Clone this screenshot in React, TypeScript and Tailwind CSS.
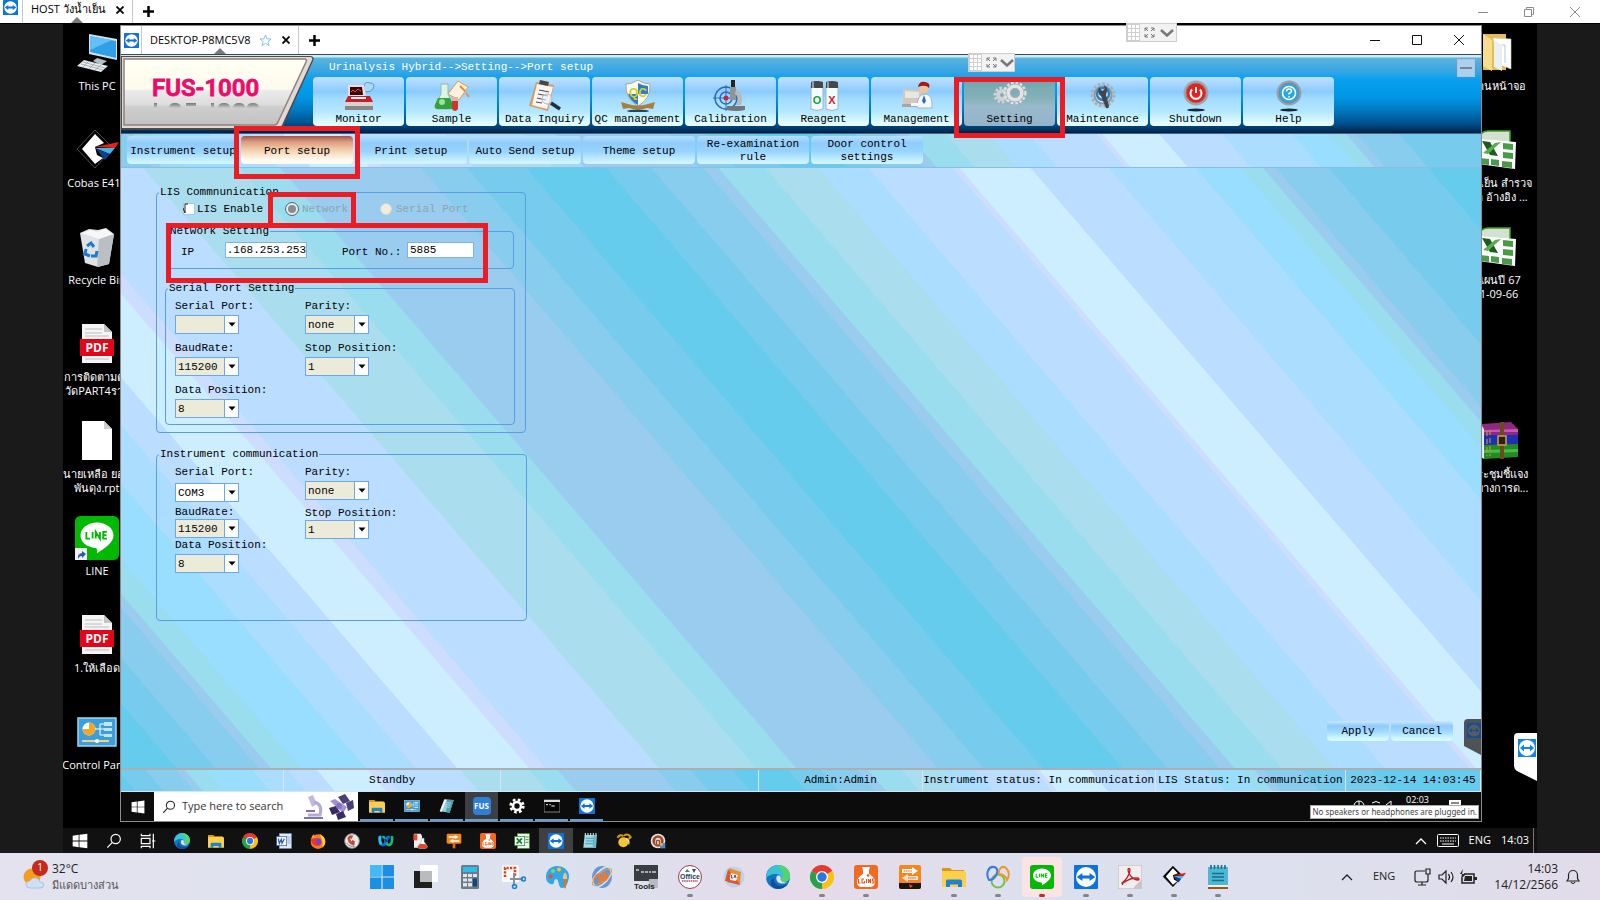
import type { ReactNode } from "react";

/* ---------- small drawings ---------- */

type IconProps = { className?: string };

const Svg = ({ className = "size-6", box = 24, children }: { className?: string; box?: number; children: ReactNode }) => (
  <svg viewBox={`0 0 ${box} ${box}`} className={`block shrink-0 ${className}`} aria-hidden="true">
    {children}
  </svg>
);

const TeamViewer = ({ className }: IconProps) => (
  <Svg className={className}>
    <rect width="24" height="24" rx="1" fill="#0b72e0" />
    <circle cx="12" cy="12" r="10" fill="#fff" />
    <path d="M2.8 12 8.4 8v2.5h7.2V8l5.6 4-5.6 4v-2.5H8.4V16z" fill="#0b72e0" />
  </Svg>
);
const Folder = ({ className }: IconProps) => (
  <Svg className={className}>
    <path d="M0 3h8l2 2h12v5H0z" fill="#d99a12" />
    <path d="M0 6h22q2 0 2 2v14H0z" fill="#fcd04f" />
    <path d="M4 22v-6q0-1.500 1.500-1.500h13q1.500 0 1.500 1.500v6h-4v-2.500H8V22z" fill="#1f82d0" />
  </Svg>
);
const Edge = ({ className }: IconProps) => (
  <Svg className={className}>
    <circle cx="12" cy="12" r="12" fill="#1474c4" />
    <path d="M0 12C1 4 7 0 12 0c8 0 12 6 12 11 0 4-3 6-7 6-3 0-3-2-2-3 1-2-1-5-5-5C5 9 1 11 0 14z" fill="#38c3d8" />
    <path d="M14 .2C20 1 24 6 24 11c0 4-3 6-7 6-3 0-3-2-2-3 4-3 3-9-3-12z" fill="#56d36b" />
    <path d="M8 13c-1 7 6 10 14 6-3 4-8 5-11 5C5 23 2 16 8 13z" fill="#0c4fa0" />
    <path d="M10.500 12c-1 5 3 7 8 6.500l3.500-1.500c-3 1-7 0-7.500-2.500.5-1 .5-2.500-.5-3.500-1-.7-3-.5-3.500 1z" fill="#dfe4f0" />
  </Svg>
);
const Chrome = ({ className }: IconProps) => (
  <Svg className={className}>
    <path d="M12 12 1.600 6A12 12 0 0 1 22.400 6z" fill="#e33b2e" />
    <path d="M12 12 22.400 6A12 12 0 0 1 12 24z" fill="#fbc116" />
    <path d="M12 12v12A12 12 0 0 1 1.600 6z" fill="#2aa148" />
    <circle cx="12" cy="12" r="6" fill="#fff" />
    <circle cx="12" cy="12" r="4.700" fill="#2b78e4" />
  </Svg>
);
const LineApp = ({ className }: IconProps) => (
  <Svg className={className}>
    <rect width="24" height="24" rx="3" fill="#00b900" />
    <path d="M12 3.500c5 0 9 3 9 7 0 4-4.500 7-9 9.800.4-1.800.2-2.600-1-2.900C6.500 17 3 14.400 3 10.500c0-4 4-7 9-7z" fill="#fff" />
    <path d="M6.200 8.700v3.600h2M9.600 8.700v3.600M11.300 12.300V8.700l2.300 3.600V8.700M17.400 8.700h-2v3.600h2M15.400 10.500h1.800" fill="none" stroke="#00b900" strokeWidth="1" />
  </Svg>
);
const Cobas = ({ className, light = false }: IconProps & { light?: boolean }) => (
  <Svg className={className} box={44}>
    <path d="M20 2 38 20 20 40 2 21z" fill="#000" stroke={light ? "#222" : "#4a4a4a"} strokeWidth="1" strokeLinejoin="round" />
    <path d="m20 6 9 9-9 4 2 8 6 3-8 6-6-7-7-8z" fill="#fff" />
    <path d="m20 19 24-5-4 6z" fill="#e8231c" />
    <path d="m20 20 20 0-5 6z" fill="#41b4e8" />
    <path d="m21 21 14 5-5 6z" fill="#123f8c" />
  </Svg>
);
const Excel = ({ className }: IconProps) => (
  <Svg className={className} box={40}>
    <path d="M1 5q3-4 8-4h22v20H1z" fill="#d4e0d2" stroke="#37a41b" strokeWidth="1.500" />
    <path d="m1 9 36 3-1 27L0 34z" fill="#fff" />
    <path d="m24 13 10 1v6l-10-1zM24 22l10 1v6l-10-1zM23 31l10 1v6l-10-1zM12 29l8 1v6l-8-1zM2 28l8 1v6l-8-1z" fill="#4a9b48" />
    <path d="m3 11 8 1 8 14-8-1z" fill="#1d5c1e" />
    <path d="m22 12-6 1L4 23l5 1z" fill="#58ae4e" />
  </Svg>
);
const Note = ({ className }: IconProps) => (
  <Svg className={className}>
    <path d="M2 2h20v18H2z" fill="#4bb9d6" />
    <path d="M2 20h20v2.500H2z" fill="#f0eee8" />
    <path d="M2 22h20v2H2z" fill="#a8510f" />
    <path d="M5 0v4M8.500 0v4M12 0v4M15.500 0v4M19 0v4" stroke="#176b85" strokeWidth="1.600" />
    <path d="M6 8.500h12M6 12h12M6 15.500h12" stroke="#15708c" strokeWidth="1.500" />
  </Svg>
);
const OldNote = ({ className }: IconProps) => (
  <Svg className={className}>
    <path d="m9 2 13 1-6 19-14-2z" fill="#8fd3de" />
    <path d="m12 3 10 0-6 19-5-1z" fill="#4d9fb4" />
    <path d="m8 2-7 18 3 1L11 3z" fill="#eef8fa" />
    <path d="m12 7 6 1M11 10l6 1M10 13l6 1" stroke="#d5f2f6" strokeWidth="1" />
  </Svg>
);
const PadNote = ({ className }: IconProps) => (
  <Svg className={className}>
    <path d="M4 3h18l-1 19H2z" fill="#9ed9e4" />
    <path d="M17 3h5l-1 19h-5z" fill="#6bb9ca" />
    <path d="M5 0v4M9 0v4M13 0v4M17 0v4M21 0v4" stroke="#dfe9ec" strokeWidth="1.600" />
    <path d="M6 8h12M6 12h12M5 16h12" stroke="#4d9fb4" strokeWidth="1.500" />
  </Svg>
);
const LoginsFlask = ({ className }: IconProps) => (
  <Svg className={className}>
    <rect width="24" height="24" rx="3" fill="#f26a21" />
    <path d="M8 2h8l-1 3v4c4 2 6 5 6 8 0 4-3 5-5 5H8c-3 0-5-2-5-5 0-3 2-6 6-8V5z" fill="#fff" />
    <path d="M4.500 14v4h2M10 14H8v4h2.500v-2M12.500 14v4M14.500 18v-4l2 4v-4M20 14h-1.500v2H20v2h-2" fill="none" stroke="#e2541b" strokeWidth="1.100" />
    <circle cx="14" cy="10.500" r="1.200" fill="#e2541b" />
  </Svg>
);
const OrangeArrows = ({ className }: IconProps) => (
  <Svg className={className}>
    <rect x="1" width="22" height="24" rx="2" fill="#f9861b" />
    <path d="M1 18h22v4q0 2-2 2H3q-2 0-2-2z" fill="#1d1512" />
    <path d="M4 4h10V2l6 4-6 4V8H4z" fill="#fff" />
    <path d="M20 11H10V9l-6 4 6 4v-2h10z" fill="#ffe2cf" />
    <path d="M6 6h8M10 13h8" stroke="#e2541b" strokeWidth="1.200" strokeDasharray="1.500 .6" />
    <path d="m11 19 4 2-3 2z" fill="#e2541b" />
  </Svg>
);
const OrangeSign = ({ className }: IconProps) => (
  <Svg className={className}>
    <rect x="1" y="1" width="22" height="15" rx="2" fill="#f9861b" />
    <path d="M10 16h4v7h-4z" fill="#e06a10" />
    <path d="M4 5h9V3l6 3-6 3V7H4zM20 11h-9V9l-6 3 6 3v-2h9z" fill="#fff" />
  </Svg>
);
const Start11 = ({ className }: IconProps) => (
  <Svg className={className}>
    <path d="M0 0h11.400v11.400H0zM12.600 0H24v11.400H12.600zM0 12.600h11.400V24H0zM12.600 12.600H24V24H12.600z" fill="#1a8fe3" />
    <path d="M0 0h11.400v11.400H0z" fill="#43b9f5" />
  </Svg>
);
const Start10 = ({ className }: IconProps) => (
  <Svg className={className}>
    <path d="m1 4 9-1.300v8.700H1zM11.200 2.500 23 1v10.400H11.200zM1 12.600h9v8.700L1 20zM11.200 12.600H23V23l-11.800-1.600z" fill="#fff" />
  </Svg>
);
const Search = ({ className, color = "#fff" }: IconProps & { color?: string }) => (
  <Svg className={className}>
    <circle cx="14.500" cy="9" r="7" fill="none" stroke={color} strokeWidth="1.800" />
    <path d="M9.500 14 2 22" stroke={color} strokeWidth="1.800" />
  </Svg>
);
const ControlPanel = ({ className }: IconProps) => (
  <Svg className={className} box={40}>
    <rect x="1" y="6" width="38" height="28" fill="#3c9fdc" stroke="#9dd8f6" strokeWidth="1.500" />
    <circle cx="12" cy="17" r="6.500" fill="#fff" />
    <path d="M12 17v-6.500A6.500 6.500 0 1 1 5.500 17z" fill="#f6a623" />
    <path d="M18 17h5v-5h4M23 17h4M23 17v6h4" stroke="#fff" fill="none" />
    <path d="M27 10h8v4h-8zM27 16h8v3h-8zM27 22h8v3h-8z" fill="#bfe5fa" />
    <path d="M5 29h27" stroke="#f5d08a" strokeWidth="2" />
    <circle cx="20" cy="29" r="2" fill="#fff" />
  </Svg>
);
const Firefox = ({ className }: IconProps) => (
  <Svg className={className}>
    <circle cx="12" cy="13" r="11" fill="#ff7a1a" />
    <path d="M14 1c6 3 9 7 9 12 0 3-2 7-5 9 2-5 1-13-4-21z" fill="#ffcf33" />
    <circle cx="11.500" cy="13.500" r="5.500" fill="#7a3fd0" />
    <path d="M1 8c4-2 9 0 10 2l-3 2c0 4 4 6 8 4-3 6-14 5-15-8z" fill="#e8382b" />
    <path d="M2 9q0-5 4-7 0 3 3 5z" fill="#ff9a2a" />
  </Svg>
);
const WordDoc = ({ className }: IconProps) => (
  <Svg className={className}>
    <rect x="5" y="1" width="18" height="22" fill="#dfe9f8" stroke="#7d9bd0" />
    <path d="M17 6h5M17 9h5M17 12h5M17 15h5" stroke="#7d9bd0" />
    <rect x="1" y="5" width="15" height="14" fill="#f4f8ff" stroke="#2b57a7" />
    <path d="m3.500 8.500 1.500 7 3-6 1 6 3.500-7" fill="none" stroke="#2b57a7" strokeWidth="1.800" />
  </Svg>
);
const ExcelDoc = ({ className }: IconProps) => (
  <Svg className={className}>
    <rect x="5" y="1" width="18" height="22" fill="#e7f4e6" stroke="#4a9b48" />
    <path d="M17 6h5M17 10h5M17 14h5" stroke="#4a9b48" strokeWidth="1.500" />
    <rect x="1" y="5" width="15" height="14" fill="#f4fff4" stroke="#1d7a31" />
    <path d="m4 8 8 8M12 8l-8 8" stroke="#1d7a31" strokeWidth="2.500" />
  </Svg>
);
const Seal = ({ className }: IconProps) => (
  <Svg className={className}>
    <circle cx="12" cy="12" r="11" fill="#e9e6e6" stroke="#8b8b8b" strokeWidth="1.500" />
    <path d="M5 7q4-5 9-3l-3 5 6 4-2 6q-6-1-8-5z" fill="#c4473b" />
    <path d="m9 8 4 2-2 3zM15 15l4-3v5z" fill="#fff" />
    <path d="M4 15q4 6 12 5" stroke="#8d8d8d" strokeWidth="1.500" fill="none" />
  </Svg>
);
const Profile = ({ className }: IconProps) => (
  <Svg className={className}>
    <circle cx="12" cy="12" r="11" fill="#e9e4e0" />
    <circle cx="12" cy="12" r="8.500" fill="#9b4a33" />
    <path d="M8 17v-6q0-4 4-4t4 4v6" fill="#f0d6c4" />
    <path d="M10 17v-6M14 17v-6M10 11h4" stroke="#7a3626" strokeWidth="1.500" />
    <path d="M15 15h8v8h-8z" fill="#4f86c6" />
    <path d="M15 15h4v4h-4z" fill="#e9b33d" />
  </Svg>
);
const Webex = ({ className }: IconProps) => (
  <Svg className={className}>
    <path d="M3 6c-1 6 1 12 5 12 5 0 4-12 8-12" stroke="#1266e2" strokeWidth="4.500" fill="none" strokeLinecap="round" />
    <path d="M8 6c4 0 3 12 8 12 4 0 6-6 5-12" stroke="#16b979" strokeWidth="4" fill="none" strokeLinecap="round" />
    <path d="M3 6c-1 5 0 8 1 10" stroke="#28c4e8" strokeWidth="4" fill="none" strokeLinecap="round" />
    <path d="M10 9q2 2 3 5" stroke="#0a3fa8" strokeWidth="3.500" fill="none" />
  </Svg>
);
const LabDoc = ({ className }: IconProps) => (
  <Svg className={className}>
    <path d="M3 1h10l2 3v18H3z" fill="#eee" />
    <path d="M2 2h6v9H2z" fill="#e24a32" />
    <path d="M14 8h4v5l5 7q0 3-3 3h-9q-3 0-2-3l5-7z" fill="#fff" stroke="#bbb" />
    <path d="m12 16 9 1 2 3q0 3-3 3h-9q-3 0-2-3z" fill="#e9432f" />
  </Svg>
);
const Paw = ({ className }: IconProps) => (
  <Svg className={className}>
    <circle cx="11" cy="14" r="7.500" fill="#f2c632" />
    <path d="M2 7q5-6 9-2M12 4q6-4 10 2l-3 3" stroke="#d99a12" strokeWidth="3" fill="none" />
    <path d="M15 8q6 2 4 9" stroke="#fff1a8" strokeWidth="1.800" fill="none" />
  </Svg>
);
const Globe = ({ className }: IconProps) => (
  <Svg className={className}>
    <ellipse cx="12" cy="12" rx="10" ry="11" fill="#6a96cf" />
    <ellipse cx="12" cy="12" rx="13" ry="6" transform="rotate(-48 12 12)" fill="none" stroke="#cfe0f5" strokeWidth="1.800" />
    <ellipse cx="12" cy="12" rx="12" ry="4" transform="rotate(-40 12 12)" fill="none" stroke="#e0a043" strokeWidth="1" />
    <path d="M4 15q4-9 6-3l-1 5q2 0 3-5t3-3l-1 6q2 1 5-6" stroke="#f2782a" strokeWidth="2" fill="none" />
  </Svg>
);
const Palette = ({ className }: IconProps) => (
  <Svg className={className}>
    <path d="M11 1C4 1 0 6 0 12c0 5 4 8 7 7 2-1 0-4 3-5s2 9 6 9c4 0 7-7 7-12C23 5 17 1 11 1z" fill="#34a5e5" />
    <circle cx="7" cy="6" r="2" fill="#7bd66a" />
    <circle cx="13" cy="4.500" r="2" fill="#f7c331" />
    <circle cx="4.500" cy="11.500" r="2" fill="#e84f3d" />
    <path d="M17 12h4l-1 10q-1 3-2 0z" fill="#c77e2e" />
    <path d="M17 11q2-7 4 0v3h-4z" fill="#e9c486" />
  </Svg>
);
const Snip = ({ className }: IconProps) => (
  <Svg className={className}>
    <rect width="17" height="17" rx="1.500" fill="#fafafa" />
    <path d="M3 12V3h10v9" fill="none" stroke="#d8401f" strokeWidth="2.500" strokeDasharray="2.200 1.300" />
    <path d="M12 8v13M8 14h13" stroke="#8a9097" strokeWidth="2" />
    <circle cx="12.500" cy="21.500" r="2" fill="none" stroke="#1583d8" strokeWidth="1.600" />
    <circle cx="21.500" cy="14" r="2" fill="none" stroke="#1583d8" strokeWidth="1.600" />
  </Svg>
);
const Calc = ({ className }: IconProps) => (
  <Svg className={className}>
    <rect x="3" y="0" width="18" height="24" rx="1.500" fill="#6c7b87" />
    <rect x="5" y="2" width="14" height="5" fill="#28c0ea" />
    <path d="M5 9h4v3H5zM10 9h4v3h-4zM15 9h4v3h-4zM5 13.500h4v3H5zM10 13.500h4v3h-4zM5 18h4v3.500H5zM10 18h4v3.500h-4z" fill="#dfe5ea" />
    <path d="M15 13.500h4v8h-4z" fill="#12447d" />
  </Svg>
);
const TaskView = ({ className }: IconProps) => (
  <Svg className={className}>
    <rect width="18" height="17" y="6" fill="#1f1f1f" />
    <rect x="6" y="0" width="18" height="17" fill="#fff" opacity=".95" />
    <path d="M6 6h12v11H6z" fill="#b9bbbf" />
  </Svg>
);
const Tools = ({ className }: IconProps) => (
  <Svg className={className}>
    <rect width="24" height="16" fill="#3a3d41" />
    <path d="M2 5h3M7 7h3M11 7h3M15 7h2M18 7h4" stroke="#cbd3d8" strokeWidth="1.500" />
    <path d="M15 14h9v9h-9z" fill="#b8bcc0" />
    <text x="0" y="23.500" fontSize="8" fontWeight="700" fontFamily="Liberation Sans, sans-serif" fill="#222">Tools</text>
  </Svg>
);
const Office = ({ className }: IconProps) => (
  <Svg className={className}>
    <circle cx="12" cy="12" r="11.500" fill="#fff" stroke="#9a3a44" strokeWidth="1" />
    <path d="m7 7 2-3 3 3z" fill="#3e8f4c" />
    <path d="M14 4h4l-2 4z" fill="#34495e" />
    <text x="12" y="13.500" textAnchor="middle" fontSize="7" fontWeight="700" fontFamily="Liberation Sans, sans-serif" fill="#1d3a5c">Office</text>
    <path d="M4 16h16" stroke="#b5434e" strokeWidth="1.500" strokeDasharray="1.500 .7" />
  </Svg>
);
const LabRing = ({ className }: IconProps) => (
  <Svg className={className}>
    <circle cx="12" cy="12" r="10.500" fill="#bcd4e8" />
    <path d="m7 3 12 4-3 4-9-3zM19 7l-1 13-4-3 1-9z" fill="#f08a32" />
    <path d="m18 20-13-3 2-4 8 2zM3 16l3-12 3 4-2 8z" fill="#e3542c" />
    <path d="m9 8 7 2-2 6-6-1z" fill="#f4f6f8" />
    <path d="M9.500 10v3h1.500M12 13l1-3 1 3" stroke="#333" strokeWidth=".8" fill="none" />
  </Svg>
);
const Rings = ({ className }: IconProps) => (
  <Svg className={className}>
    <circle cx="12" cy="16" r="6.500" fill="none" stroke="#76bf4a" strokeWidth="2" />
    <path d="M3 15C-1 8 3 1 8 2s4 8-1 12q-2 1-4 1z" fill="none" stroke="#3b78e0" strokeWidth="2" />
    <path d="M13 9c-1-5 3-9 7-6 4 4 3 9 1 12q-1-5-8-6z" fill="none" stroke="#ee9a2a" strokeWidth="2" />
  </Svg>
);
const Acrobat = ({ className }: IconProps) => (
  <Svg className={className}>
    <rect width="24" height="24" rx="1" fill="#f1eeee" stroke="#b5b0b0" />
    <path d="M16 22 24 14v10h-8z" fill="#c9c5c5" />
    <path d="M4 18c3-2 8-8 8-13 0-2-2-2-2 0 0 4 5 10 10 10 2 0 1-2-1-2-4 0-10 2-14 5-1 2 0 2-1 0z" fill="none" stroke="#bb1e26" strokeWidth="1.300" />
  </Svg>
);
const Pdf = () => (
  <Svg className="size-10" box={40}>
    <path d="M5 0h22l8 8v31H5z" fill="#f5f5f5" />
    <path d="M27 0v8h8z" fill="#c5c5c5" />
    <path d="M8 5h17M8 9h17M8 12h24M8 35h24" stroke="#bdbdbd" />
    <rect x="3" y="15" width="34" height="17" fill="#e2061b" />
    <text x="20" y="28" textAnchor="middle" fontSize="12" fontWeight="700" fontFamily="Open Sans, sans-serif" fill="#fff">PDF</text>
  </Svg>
);
const BlankDoc = () => (
  <Svg className="size-10" box={40}>
    <path d="M5 0h22l8 8v31H5z" fill="#fff" />
    <path d="M27 0v8h8z" fill="#cfcfcf" />
  </Svg>
);
const ThisPc = () => (
  <Svg className="size-11" box={44}>
    <path d="m14 3 28 5v21l-28-6z" fill="#d7e3ea" />
    <path d="m15 5 26 5v17l-26-6z" fill="#2fa0e8" />
    <path d="m15 5 22 4-22 10z" fill="#63c0f7" />
    <path d="m22 27 10 3-6 4-8-4z" fill="#b4bec4" />
    <path d="m9 29 24 6-7 6L2 35z" fill="#e8ebed" />
    <path d="m8 31 22 6M6 33l22 6M14 30l-6 6M20 32l-6 6M26 34l-6 5" stroke="#9aa3a8" strokeWidth=".8" />
  </Svg>
);
const RecycleBin = () => (
  <Svg className="size-10" box={40}>
    <path d="m3 6 9-4 9 1 8-2 8 6-5 30-11 3-13-4z" fill="#dfe3e5" />
    <path d="m37 7-15 5-2 28 12-3z" fill="#b9bfc2" />
    <path d="m4 6 10-3 6 2 8-3 8 5-14 5z" fill="#f6f7f7" />
    <path d="m10 19 4-3 3 4M9 22l-1 5 5 2M14 29l5 0 1-5" fill="none" stroke="#1d7ad0" strokeWidth="3" />
  </Svg>
);
const FolderDesk = () => (
  <Svg className="size-10" box={40}>
    <path d="M4 1h23v36H4z" fill="#e3bd58" />
    <path d="m14 5 18 1v30l-13-5z" fill="#fff" stroke="#ccc" strokeWidth=".6" />
    <path d="m4 1 9 6v31l-9-5z" fill="#f8dd8e" />
    <path d="m15 7 8 5v26l-8-4z" fill="#eceff1" />
    <path d="M23 12h3v18" stroke="#b8c7d6" fill="none" />
  </Svg>
);
const WinRar = () => (
  <Svg className="size-10" box={40}>
    <path d="m2 3 30-2 7 7v7H5z" fill="#8d2a7d" />
    <path d="m5 9 34-1v3H5z" fill="#c657b4" />
    <path d="m2 14 37 0v10H5z" fill="#1d2fb4" />
    <path d="m2 24 37-1v13l-34 2z" fill="#248a24" />
    <path d="m5 29 34-1v3l-34 1z" fill="#49b948" />
    <path d="M2 3v33l3 2V8z" fill="#e8e8e8" />
    <path d="M21 1h4v37h-4z" fill="#6d4a1c" />
    <path d="M19 15h8v9h-8z" fill="#2c2118" stroke="#c9a24a" strokeWidth="1.500" />
    <path d="M8 10v25M11 9v26" stroke="#b8953a" strokeWidth="1.200" strokeDasharray="5 3" />
  </Svg>
);
const LineDesk = () => (
  <span className="relative block">
    <LineApp className="size-11" />
    <Svg className="absolute bottom-0 left-0 size-3" box={12}>
      <path d="M0 0h12v12H0z" fill="#f2f2f2" />
      <path d="M3 11q-1-5 4-6V3l4 3-4 4V8Q4 8 3 11z" fill="#2659a8" />
    </Svg>
  </span>
);

/* ---------- application tool bar drawings ---------- */

const tool = "h-8 w-10";
const MonitorIcon = () => (
  <svg viewBox="0 0 40 32" className={tool} aria-hidden="true">
    <path d="M25 7q0-6 6-4 6 0 3 6-2 3-7 3" fill="#a9d8f5" stroke="#4f9bd0" />
    <path d="M9 5h16l2 12H9z" fill="#e9dede" />
    <path d="M11 7h12l1 8H11z" fill="#3b0508" />
    <path d="m12 12 2-2 2 2 3-3 3 2" stroke="#f04a4a" fill="none" />
    <path d="M9 16h22l3 6H6z" fill="#c91e28" />
    <path d="M6 22h28v7H6z" fill="#d8d3d2" />
    <path d="M6 26h28v4H6z" fill="#8b8786" />
    <path d="M12 18h15" stroke="#fff" strokeWidth="2" />
  </svg>
);
const SampleIcon = () => (
  <svg viewBox="0 0 40 32" className={tool} aria-hidden="true">
    <path d="m16 14 10-13 10 6-9 13z" fill="#fff2dc" stroke="#d9a05c" />
    <path d="m28 6 5 5M34 13l3 4" stroke="#f28b2d" strokeWidth="2" />
    <path d="M9 4h7v10l5 11q1 4-3 4H6q-4 0-3-4l6-11z" fill="#dff3e4" stroke="#9bb7a8" />
    <path d="M6 18h12l3 7q1 4-3 4H6q-4 0-3-4z" fill="#33a23d" />
    <circle cx="10" cy="22" r="3" fill="#9be39a" />
    <path d="M20 17h6v12q-3 4-6 0z" fill="#c9382b" />
    <path d="M20 17h6v4h-6z" fill="#e6b3a9" />
  </svg>
);
const InquiryIcon = () => (
  <svg viewBox="0 0 40 32" className={tool} aria-hidden="true">
    <path d="m11 2 18 3-6 26L4 26z" fill="#d29c6b" />
    <path d="m12 4 16 3-6 22-15-4z" fill="#fdf6ee" />
    <path d="m15 0 9 2-1 4-9-2z" fill="#4b4340" />
    <path d="m14 10 10 2M13 14l10 2M12 18l9 2M11 22l6 1" stroke="#4a4a6a" strokeWidth="1.200" />
    <circle cx="22" cy="19" r="5" fill="#e8f4ff" fillOpacity=".6" stroke="#b7b7b7" />
    <path d="m26 23 9 6" stroke="#222c3f" strokeWidth="3.500" />
  </svg>
);
const QcIcon = () => (
  <svg viewBox="0 0 40 32" className={tool} aria-hidden="true">
    <path d="M8 4q6 0 12-4 6 4 12 4 1 15-12 22Q7 19 8 4z" fill="#f7f9f4" stroke="#a5a8a0" />
    <path d="M20 3q5 3 10 3v8H20zM10 14h10v11q-8-4-10-11z" fill="#2f7fc4" />
    <path d="m3 22 7 2q10 3 20 0l7-2-2 7-6-1q-9 3-18 0l-6 1z" fill="#a9803a" />
    <text x="20" y="17" textAnchor="middle" fontSize="12" fontWeight="700" fontFamily="Liberation Sans, sans-serif" fill="#d8cf19">QC</text>
    <ellipse cx="20" cy="31" rx="11" ry="1.500" fill="#1f4a66" />
  </svg>
);
const CalibrationIcon = () => (
  <svg viewBox="0 0 40 32" className={tool} aria-hidden="true">
    <circle cx="15" cy="18" r="11" fill="none" stroke="#2a6db5" strokeWidth="1.500" />
    <circle cx="15" cy="18" r="6" fill="none" stroke="#2a6db5" strokeWidth="1.500" />
    <path d="M15 5v26M2 18h26" stroke="#2a6db5" />
    <circle cx="15" cy="18" r="2.500" fill="#c6243b" />
    <path d="M20 0h4v8h-4z" fill="#222" />
    <path d="M19 7h6v13h-6z" fill="#8d949a" />
    <path d="M25 9q9 4 5 16h-5q4-8-1-11z" fill="#b5babd" />
    <path d="M16 26h18v4q-9 2-18 0z" fill="#6f777c" />
  </svg>
);
const ReagentIcon = () => (
  <svg viewBox="0 0 40 32" className={tool} aria-hidden="true">
    <path d="M7 5h12v24q-6 3-12 0zM22 5h12v24q-6 3-12 0z" fill="#f2fbff" stroke="#9db5c2" />
    <path d="M7 2q6-2 12 0v6H7zM22 2q6-2 12 0v6H22z" fill="#44484b" />
    <path d="M9 2v6M24 2v6" stroke="#9a9fa2" strokeWidth="2" />
    <text x="13" y="24" textAnchor="middle" fontSize="11" fontWeight="700" fontFamily="Liberation Sans, sans-serif" fill="#15a03c">O</text>
    <text x="28" y="24" textAnchor="middle" fontSize="11" fontWeight="700" fontFamily="Liberation Sans, sans-serif" fill="#d32222">X</text>
  </svg>
);
const ManagementIcon = () => (
  <svg viewBox="0 0 40 32" className={tool} aria-hidden="true">
    <path d="m6 9 19 1v14H6z" fill="#cfc9c0" />
    <path d="m8 11 14 1v6H8z" fill="#e9e6df" />
    <path d="M5 24h22v3H5z" fill="#a9a49c" />
    <circle cx="27" cy="8" r="5" fill="#f1c39c" />
    <path d="M21 7q1-6 7-5 6 1 4 6-3-4-11-1z" fill="#9d1c1c" />
    <path d="M20 28q0-14 8-14t7 14z" fill="#f4f8fb" stroke="#9fb6c4" />
    <path d="m27 15 2 6-2 3-2-3z" fill="#2b6cc0" />
    <path d="M14 23h10v3H14z" fill="#f4f8fb" />
  </svg>
);
const Gear = ({ x, y, r, fill }: { x: number; y: number; r: number; fill: string }) => (
  <g>
    <circle cx={x} cy={y} r={r} fill="none" stroke={fill} strokeWidth="3" strokeDasharray="2.500 1.800" />
    <circle cx={x} cy={y} r={r - 3} fill="none" stroke={fill} strokeWidth="4" />
  </g>
);
const SettingIcon = () => (
  <svg viewBox="0 0 40 32" className={tool} aria-hidden="true">
    <Gear x={12} y={15} r={7} fill="#d0d3d5" />
    <Gear x={25} y={13} r={10} fill="#e2e4e6" />
    <circle cx="25" cy="13" r="9" fill="none" stroke="#a9adb0" strokeWidth=".8" />
    <circle cx="25" cy="13" r="4.500" fill="none" stroke="#a9adb0" strokeWidth=".8" />
  </svg>
);
const MaintenanceIcon = () => (
  <svg viewBox="0 0 40 32" className={tool} aria-hidden="true">
    <circle cx="20" cy="15" r="11" fill="none" stroke="#a9b2b9" strokeWidth="3" strokeDasharray="3 1.600" />
    <circle cx="20" cy="15" r="8.500" fill="#e4ebf0" stroke="#8e989f" strokeWidth="2" />
    <circle cx="20" cy="14" r="6" fill="none" stroke="#2b7fc4" strokeWidth="2.500" />
    <path d="m16 7 3 4 3-2-1-4q4 2 3 6l-1 4 3 11q0 3-3 2l-5-12q-4-2-2-9z" fill="#3f4850" />
  </svg>
);
const RoundIcon = ({ fill, rim, children }: { fill: string; rim: string; children: ReactNode }) => (
  <svg viewBox="0 0 40 32" className={tool} aria-hidden="true">
    <circle cx="20" cy="13" r="12.500" fill={rim} />
    <circle cx="20" cy="13" r="10" fill={fill} stroke="#8f7f80" />
    {children}
    <ellipse cx="20" cy="30" rx="9" ry="1.500" fill="#13283c" />
  </svg>
);
const ShutdownIcon = () => (
  <RoundIcon fill="#e2221c" rim="#a9a3a5">
    <path d="M16 9.500a5.500 5.500 0 1 0 8 0M20 7v6" stroke="#fff" strokeWidth="2" fill="none" />
  </RoundIcon>
);
const HelpIcon = () => (
  <RoundIcon fill="#2ba7e4" rim="#8fa3b3">
    <circle cx="20" cy="13" r="6.500" fill="none" stroke="#fff" strokeWidth="1.500" />
    <path d="M17.500 11.500q0-2.500 2.500-2.500t2.500 2q0 1.500-2.500 2.500v1M20 16v1.500" stroke="#fff" strokeWidth="1.500" fill="none" />
  </RoundIcon>
);

/* ---------- striped backdrop ---------- */

const stripes: [number, string][] = [
  [-640, "#66ccee"], [-460, "#77ccee"], [-421, "#88ccee"], [-378, "#99ccee"], [-366, "#99ddee"], [-336, "#99ddff"],
  [-271, "#aaddff"], [-221, "#bbddff"], [-180, "#cceeff"], [-108, "#ccddff"], [-91, "#bbddff"], [22, "#aaddee"],
  [119, "#99ddee"], [159, "#99ccee"], [300, "#88ccee"], [346, "#77ccee"], [405, "#66ccee"], [485, "#77ccee"],
  [530, "#88ccee"], [582, "#99ccee"], [597, "#99ddee"], [644, "#aaddee"], [697, "#aaddff"], [747, "#bbddff"],
  [831, "#ccddff"], [838, "#cceeff"], [909, "#bbddff"], [987, "#aaddff"], [1074, "#99ddff"], [1119, "#99ddee"],
  [1141, "#99ccee"], [1154, "#88ccee"], [1207, "#77ccee"], [1306, "#66ccee"], [1600, "#66ccee"],
];
const Backdrop = ({ viewBox }: { viewBox: string }) => (
  <svg viewBox={viewBox} preserveAspectRatio="xMinYMin slice" className="absolute inset-0 size-full" aria-hidden="true">
    <g transform="skewX(40.700)">
      {stripes.slice(0, -1).map(([u, fill], i) => (
        <rect key={u} x={u} y="0" width={stripes[i + 1][0] - u + 1} height="700" fill={fill} />
      ))}
    </g>
  </svg>
);

/* ---------- form parts ---------- */

const Field = ({ id, label, value, gap = "gap-0.5", enabled = false }: { id: string; label: string; value: string; gap?: string; enabled?: boolean }) => (
  <div className={`flex flex-col items-start ${gap}`}>
    <label htmlFor={id} className="h-3.5 leading-3.5 whitespace-nowrap">{label}</label>
    <span className="relative block h-[19px] w-16">
      <select id={id} defaultValue={value} className={`block size-full appearance-none border border-[#6ca6ee] pl-0.5 text-[11px] leading-4 outline-none ${enabled ? "bg-white" : "bg-[#ecebda]"}`}>
        <option>{value}</option>
      </select>
      <span className="pointer-events-none absolute top-0 right-0 flex h-full w-[15px] items-center justify-center border border-[#6ca6ee] bg-white">
        <svg viewBox="0 0 8 5" className="h-[5px] w-2" aria-hidden="true"><path d="M.5.500h7L4 4.500z" fill="#000" /></svg>
      </span>
    </span>
  </div>
);
const frame = "border-[#5b9ce6] border rounded min-w-0";
const Mark = ({ className }: IconProps) => <span className={`pointer-events-none absolute z-10 border-5 border-[#ed1c24] ${className}`} />;

const Viewer = ({ className }: IconProps) => (
  <div className={`absolute flex h-[19px] items-stretch border border-[#cfcfcf] bg-[#f2f2f2] ${className}`}>
    <svg viewBox="0 0 13 17" className="w-[13px]" aria-hidden="true">
      <path d="M0 0h13v17H0z" fill="#cfcfcf" />
      <path d="M1 1h3v3H1zM5 1h3v3H5zM9 1h3v3H9zM1 5h3v3H1zM5 5h3v3H5zM9 5h3v3H9zM1 9h3v3H1zM5 9h3v3H5zM9 9h3v3H9zM1 13h3v3H1zM5 13h3v3H5zM9 13h3v3H9z" fill="#fff" />
    </svg>
    <button type="button" aria-label="Full screen" className="flex w-[18px] items-center justify-center">
      <svg viewBox="0 0 11 11" className="size-[11px]" aria-hidden="true">
        <path d="M1 4V1h3M7 1h3v3M10 7v3H7M4 10H1V7M1 1l3 3M10 1 7 4M10 10 7 7M1 10l3-3" stroke="#777" fill="none" />
      </svg>
    </button>
    <button type="button" aria-label="Expand" className="flex flex-1 items-center justify-center">
      <svg viewBox="0 0 14 8" className="h-2 w-[14px]" aria-hidden="true"><path d="m1 1 6 5.500L13 1" stroke="#777" strokeWidth="2.500" fill="none" /></svg>
    </button>
  </div>
);

const Tab = ({ title, star = false }: { title: string; star?: boolean }) => (
  <div className="relative flex items-center border-x border-[#c8c8c8] px-2">
    <span className="text-[11px] whitespace-nowrap">{title}</span>
    {star && (
      <svg viewBox="0 0 14 14" className="ml-2 size-[13px]" aria-hidden="true">
        <path d="m7 1 1.700 4.200 4.300.2-3.400 2.800 1.200 4.300L7 10l-3.800 2.500 1.200-4.300L1 5.400l4.300-.2z" fill="none" stroke="#7cbcf0" />
      </svg>
    )}
    <button type="button" aria-label="Close tab" className="ml-2.5">
      <svg viewBox="0 0 8 8" className="size-2" aria-hidden="true"><path d="m.5.500 7 7M7.500.500l-7 7" stroke="#000" strokeWidth="1.800" /></svg>
    </button>
    <span className="absolute bottom-0 left-1/2 -translate-x-1/2 border-x-6 border-b-6 border-x-transparent border-b-[#7a7a7a]" />
  </div>
);
const Plus = () => (
  <button type="button" aria-label="New tab" className="px-2.5">
    <svg viewBox="0 0 11 11" className="size-[11px]" aria-hidden="true"><path d="M5.500 0v11M0 5.500h11" stroke="#000" strokeWidth="2.500" /></svg>
  </button>
);
const WindowButtons = ({ color, gap, restore = false }: { color: string; gap: string; restore?: boolean }) => (
  <div className={`ml-auto flex items-center ${gap}`}>
    <button type="button" aria-label="Minimize"><svg viewBox="0 0 10 10" className="size-2.5" aria-hidden="true"><path d="M0 5.500h10" stroke={color} /></svg></button>
    <button type="button" aria-label="Maximize">
      <svg viewBox="0 0 10 10" className="size-2.5" aria-hidden="true">
        {restore ? <path d="M.5 2.500h7v7h-7zM2.500 2V.500h7v7H8" stroke={color} fill="none" /> : <path d="M.5.500h9v9h-9z" stroke={color} fill="none" />}
      </svg>
    </button>
    <button type="button" aria-label="Close"><svg viewBox="0 0 10 10" className="size-2.5" aria-hidden="true"><path d="m0 0 10 10M10 0 0 10" stroke={color} /></svg></button>
  </div>
);

const DeskIcon = ({ icon, lines }: { icon: ReactNode; lines: string[] }) => (
  <div className="flex h-[97px] w-[76px] flex-col items-center">
    <div className="flex h-[50px] shrink-0 items-center justify-center pt-1.5">{icon}</div>
    <div className="pt-1 text-center text-[11px] leading-[14px] whitespace-nowrap text-white">
      {lines.map((l) => <div key={l}>{l}</div>)}
    </div>
  </div>
);

/* ---------- data ---------- */

const tools: [string, ReactNode][] = [
  ["Monitor", <MonitorIcon />], ["Sample", <SampleIcon />], ["Data Inquiry", <InquiryIcon />], ["QC management", <QcIcon />],
  ["Calibration", <CalibrationIcon />], ["Reagent", <ReagentIcon />], ["Management", <ManagementIcon />], ["Setting", <SettingIcon />],
  ["Maintenance", <MaintenanceIcon />], ["Shutdown", <ShutdownIcon />], ["Help", <HelpIcon />],
];
const tabs = ["Instrument setup", "Port setup", "Print setup", "Auto Send setup", "Theme setup", "Re-examination rule", "Door control settings"];
const status = ["", "Standby", "", "Admin:Admin", "Instrument status: In communication", "LIS Status: In communication", "2023-12-14 14:03:45"];

const innerTasks: [string, ReactNode][] = [
  ["File Explorer", <Folder className="size-4" />],
  ["Control Panel", <ControlPanel className="size-4" />],
  ["Notepad", <OldNote className="size-4" />],
  ["FUS", <span className="flex size-[18px] items-center justify-center rounded-sm bg-[#2f7fd6] text-[8px] font-bold text-white">FUS</span>],
  ["Settings", <Svg className="size-4"><circle cx="12" cy="12" r="6" fill="none" stroke="#fff" strokeWidth="4" /><circle cx="12" cy="12" r="9.500" fill="none" stroke="#fff" strokeWidth="4" strokeDasharray="4 3.460" /></Svg>],
  ["Command Prompt", <Svg className="size-4"><rect y="3" width="24" height="18" fill="#050505" stroke="#bbb" /><path d="M0 3h24v3H0z" fill="#ddd" /><path d="M3 10h3M8 10h2M11 12h5" stroke="#fff" strokeWidth="1.500" /></Svg>],
  ["TeamViewer", <TeamViewer className="size-4" />],
];
const remoteTasks: [string, ReactNode][] = [
  ["Start", <Start10 className="size-4" />],
  ["Search", <Search className="size-4" />],
  ["Task View", <Svg className="size-4"><path d="M2 1v3h13V1M2 23v-3h13v3M2 8h13v8H2zM20 1v22M18 12h5" fill="none" stroke="#fff" strokeWidth="1.800" /></Svg>],
  ["Edge", <Edge className="size-4" />],
  ["File Explorer", <Folder className="size-4" />],
  ["Chrome", <Chrome className="size-4" />],
  ["Word", <WordDoc className="size-4" />],
  ["Firefox", <Firefox className="size-4" />],
  ["Logins", <Seal className="size-4" />],
  ["Webex", <Webex className="size-4" />],
  ["Lab", <LabDoc className="size-4" />],
  ["Transfer", <OrangeSign className="size-4" />],
  ["Logins Lab", <LoginsFlask className="size-4" />],
  ["Excel", <ExcelDoc className="size-4" />],
  ["TeamViewer", <TeamViewer className="size-4" />],
  ["Notepad", <PadNote className="size-4" />],
  ["Watch", <Paw className="size-4" />],
  ["Profile", <Profile className="size-4" />],
];
const hostTasks: [string, ReactNode, boolean][] = [
  ["Start", <Start11 />, false],
  ["Task View", <TaskView />, false],
  ["Calculator", <Calc />, false],
  ["Snipping Tool", <Snip />, false],
  ["Paint", <Palette />, false],
  ["Browser", <Globe />, false],
  ["Tools", <Tools />, false],
  ["Office", <Office />, true],
  ["Lab", <LabRing />, false],
  ["Edge", <Edge />, false],
  ["Chrome", <Chrome />, true],
  ["Logins", <LoginsFlask />, true],
  ["Transfer", <OrangeArrows />, false],
  ["File Explorer", <Folder />, true],
  ["Navicat", <Rings />, true],
  ["LINE", <LineApp />, true],
  ["TeamViewer", <TeamViewer />, true],
  ["Acrobat", <Acrobat />, true],
  ["Cobas", <Cobas light />, true],
  ["Notepad", <Note />, true],
];

/* ---------- page sections ---------- */

const AppHeader = () => (
  <header className="relative flex h-[79px] bg-[linear-gradient(#c9efff_0,#c9efff_2px,#5bb4dd_3px,#38a6e4_16px,#0aa0f0_24px,#0096e6_42px,#0077bd_56px,#00528f_68px,#003360_75px,#001c38_78px,#6ab4e0_79px)]">
    <svg viewBox="0 0 196 76" className="-mr-1 h-[76px] w-[196px] shrink-0" aria-hidden="true">
      <defs>
        <linearGradient id="plate" x1="0" y1="0" x2="0" y2="1">
          <stop offset="0" stopColor="#fffff4" /><stop offset=".46" stopColor="#fdfbec" /><stop offset=".47" stopColor="#ececec" />
          <stop offset=".7" stopColor="#dcdcdc" /><stop offset=".71" stopColor="#cfcfcf" /><stop offset="1" stopColor="#c2c2c2" />
        </linearGradient>
        <linearGradient id="fade" x1="0" y1="0" x2="0" y2="1"><stop offset="0" stopColor="#777" /><stop offset="1" stopColor="#ccc" /></linearGradient>
      </defs>
      <path d="M0 1h189q5 0 3 5l-30 66q-2 3-5 3H0z" fill="#4f4b4c" />
      <path d="M1 2h188q3 0 2 3l-30 65q-2 3-5 3H1z" fill="#e2d9d4" />
      <path d="M3 4h181q2 0 1 3l-28 60q-1 3-4 3H3z" fill="url(#plate)" stroke="#8c8281" strokeWidth="1.500" />
      <text x="31" y="41" fontSize="24" fontWeight="600" fontFamily="Roboto, sans-serif" fill="#ee0a6c" stroke="#ee0a6c" strokeWidth=".8">FUS-1000</text>
      <path d="M33 48h3v5h-3zM48 53q0-5 6-5t6 5zM65 48h10v3h-10zM90 48h3v5h-3zM97 53q0-5 6-5t6 5zM112 53q0-5 6-5t6 5zM126 53q0-5 6-5t6 5z" fill="url(#fade)" />
    </svg>
    <div className="flex flex-col">
      <div className="h-[22px] pt-1 pl-4 text-[11px] leading-4 text-white">Urinalysis Hybrid--&gt;Setting--&gt;Port setup</div>
      <nav className="flex gap-0.5" aria-label="Modules">
        {tools.map(([name, icon]) => (
          <div key={name} className="relative">
            <button
              type="button"
              className={`flex h-[49px] w-[91px] flex-col items-center rounded-sm pt-[3px] text-[11px] leading-[14px] whitespace-nowrap ${name === "Setting" ? "bg-[linear-gradient(#6fa3ae,#86b2b8_45%,#9bb9cd_60%,#93b4c8)]" : "bg-[linear-gradient(#c0e2ff,#8accff_30%,#a4dcff_45%,#b4e6ff_70%,#dcfcff_92%,#eaffff)]"}`}
            >
              {icon}
              <span>{name}</span>
            </button>
            {name === "Setting" && <Mark className="top-0 -right-2.5 -bottom-3 -left-2.5" />}
          </div>
        ))}
      </nav>
    </div>
    <button type="button" aria-label="Minimize application" className="mt-1 mr-1.5 ml-auto flex size-[18px] items-center justify-center border border-[#d6b7c4] bg-[#a9d2ee]">
      <span className="h-0.5 w-3 bg-[#857f92]" />
    </button>
  </header>
);

const TabStrip = () => (
  <div className="relative h-[34px] border-b border-[#8cbce6]">
    <Backdrop viewBox="-381 0 1699 41" />
    <div className="relative flex gap-0.5 pt-0.5 pl-1.5" role="tablist">
      {tabs.map((name) => (
        <div key={name} className="relative">
          <button
            type="button"
            role="tab"
            aria-selected={name === "Port setup"}
            className={`flex h-7 w-28 items-center justify-center rounded-sm px-1.5 pt-0.5 text-[11px] leading-[13px] ${name.length > 16 ? "" : "whitespace-nowrap"} ${name === "Port setup" ? "bg-[linear-gradient(#a85048,#d99b80_20%,#f0c8a4_45%,#f8dcc0_60%,#fffaf0_85%)]" : "bg-[linear-gradient(#b4e0ff,#90ccfb_25%,#98d4ff_55%,#bdeaff_80%,#d6f6ff)]"}`}
          >
            {name}
          </button>
          {name === "Port setup" && <Mark className="-top-2.5 -right-[7px] -bottom-[15px] -left-[7px]" />}
        </div>
      ))}
    </div>
  </div>
);

const PortSetup = () => (
  <main className="relative flex min-h-[600px] flex-1 flex-col pt-[17px] pl-[35px] text-[11px]">
    <Backdrop viewBox="0 0 1359 600" />
    <fieldset className={`relative h-[248px] w-[370px] ${frame}`}>
      <legend className="ml-0.5 h-3.5 px-px leading-3.5">LIS Commnunication</legend>
      <div className="flex h-5 items-center pl-[26px]">
        <label className="flex w-[103px] items-center gap-0.5">
          <span className="relative block size-3">
            <input type="checkbox" defaultChecked className="block size-3 appearance-none border border-[#a9c8e8] bg-white" />
            <svg viewBox="0 0 12 12" className="pointer-events-none absolute inset-0" aria-hidden="true"><path d="m0 5 2 5V1h3" stroke="#222" fill="none" /></svg>
          </span>
          LIS Enable
        </label>
        <label className="relative flex w-[94px] items-center gap-1 text-[#8fa3ae]">
          <input type="radio" name="link" defaultChecked className="size-3 appearance-none rounded-full border-2 border-[#e8eef2] bg-[#8b8b8b] outline outline-[#5a6670]" />
          Network
          <Mark className="-top-[9px] -left-[18px] h-[36px] w-[88px]" />
        </label>
        <label className="flex items-center gap-1 text-[#8fa3ae]">
          <input type="radio" name="link" className="size-3 appearance-none rounded-full border border-[#d7d6c8] bg-[#efeedd]" />
          Serial Port
        </label>
      </div>
      <fieldset className={`relative mt-[5px] ml-[9px] h-[45px] w-[348px] ${frame}`}>
        <legend className="ml-0.5 h-3.5 px-px leading-3.5">Network Setting</legend>
        <div className="flex items-center pt-0.5 pl-3.5">
          <label htmlFor="ip" className="w-11 pt-1">IP</label>
          <span className="flex h-4 w-[82px] items-center justify-end overflow-hidden border border-[#7cb2ee] bg-white">
            <input id="ip" defaultValue=":.168.253.253" className="w-[88px] shrink-0 bg-transparent text-right leading-3.5 outline-none" />
          </span>
          <label htmlFor="port" className="ml-[35px] w-[65px] pt-1">Port No.:</label>
          <input id="port" defaultValue="5885" className="h-4 w-[67px] border border-[#7cb2ee] bg-white px-0.5 outline-none" />
        </div>
        <Mark className="-top-[15px] -left-px h-[60px] w-[322px]" />
      </fieldset>
      <fieldset className={`mt-3 ml-2 h-36 w-[350px] ${frame}`}>
        <legend className="ml-0.5 h-3.5 px-px leading-3.5">Serial Port Setting</legend>
        <div className="flex gap-[66px] pt-1 pl-[9px]">
          <div className="flex w-16 flex-col gap-[7px]">
            <Field id="s1" label="Serial Port:" value="" />
            <Field id="s2" label="BaudRate:" value="115200" />
            <Field id="s3" label="Data Position:" value="8" />
          </div>
          <div className="flex flex-col gap-[7px]">
            <Field id="s4" label="Parity:" value="none" />
            <Field id="s5" label="Stop Position:" value="1" />
          </div>
        </div>
      </fieldset>
    </fieldset>
    <fieldset className={`relative mt-3.5 h-[174px] w-[371px] ${frame}`}>
      <legend className="ml-0.5 h-3.5 px-px leading-3.5">Instrument communication</legend>
      <div className="flex gap-[66px] pt-1 pl-[18px]">
        <div className="flex w-16 flex-col">
          <Field id="i1" label="Serial Port:" value="COM3" gap="gap-1" enabled />
          <div className="pt-[3px]"><Field id="i2" label="BaudRate:" value="115200" gap="gap-0" /></div>
          <Field id="i3" label="Data Position:" value="8" />
        </div>
        <div className="flex flex-col gap-1.5">
          <Field id="i4" label="Parity:" value="none" />
          <Field id="i5" label="Stop Position:" value="1" gap="gap-0" />
        </div>
      </div>
    </fieldset>
    <div className="relative mt-auto flex justify-end gap-0.5 pr-7 pb-[27px]">
      {["Apply", "Cancel"].map((b) => (
        <button key={b} type="button" className="h-5 w-[62px] rounded-sm bg-[linear-gradient(#cbe8ff,#8fcaff_25%,#a2dcff_55%,#d4fbff_90%)]">{b}</button>
      ))}
    </div>
    <div className="absolute right-0 bottom-[13px] h-9 w-[17px] overflow-hidden">
      <svg viewBox="0 0 17 36" className="size-full" aria-hidden="true">
        <path d="M4 0h13v36L0 27V4q0-4 4-4z" fill="#4f5357" />
        <path d="M3 4h14v15H3z" fill="#134f92" />
        <circle cx="10" cy="11.500" r="6" fill="#585c60" />
        <path d="m5 11.500 3-2.500v2h4V9l3 2.500-3 2.500v-2H8v2z" fill="#134f92" />
      </svg>
    </div>
  </main>
);

export default function App() {
  return (
    <div className="flex min-h-screen flex-col bg-[#1a1a1a] font-['Open_Sans','Noto_Sans',sans-serif] text-black">
      <div className="flex h-6 shrink-0 border-b border-black bg-white pr-5">
        <div className="flex w-[22px] justify-end pr-1"><TeamViewer className="size-[15px]" /></div>
        <div className="flex [&>div]:pb-1"><Tab title="HOST วังน้ำเย็น" /><Plus /></div>
        <WindowButtons color="#8a8a8a" gap="gap-9" restore />
      </div>

      <div className="relative mr-[63px] ml-[63px] flex flex-1 flex-col bg-black">
        <div className="flex flex-1 pt-px pb-1.5">
          <div className="w-[57px] shrink-0 overflow-hidden">
            <div className="-ml-1">
              <DeskIcon icon={<ThisPc />} lines={["This PC"]} />
              <DeskIcon icon={<Cobas className="size-11" />} lines={["Cobas E411"]} />
              <DeskIcon icon={<RecycleBin />} lines={["Recycle Bin"]} />
              <DeskIcon icon={<Pdf />} lines={["การติดตามตัว", "วัดPART4ราย"]} />
              <DeskIcon icon={<BlankDoc />} lines={["นายเหลือ ยอด", "พันดุง.rpt"]} />
              <DeskIcon icon={<LineDesk />} lines={["LINE"]} />
              <DeskIcon icon={<Pdf />} lines={["1.ให้เลือด"]} />
              <DeskIcon icon={<ControlPanel className="size-10" />} lines={["Control Panel"]} />
            </div>
          </div>

          <div className="flex min-w-0 flex-1 flex-col border border-[#8c8c8c] bg-white">
            <div className="flex h-7 shrink-0 pr-[17px]">
              <div className="flex w-5 items-center pl-[3px]"><TeamViewer className="size-[15px]" /></div>
              <Tab title="DESKTOP-P8MC5V8" star />
              <Plus />
              <WindowButtons color="#111" gap="gap-8" />
            </div>
            <div className="relative flex flex-1 flex-col overflow-clip border-t border-[#444] font-['Liberation_Mono',monospace]">
              <AppHeader />
              <TabStrip />
              <PortSetup />
              <footer className="relative grid h-6 grid-cols-[163fr_217fr_258fr_163fr_233fr_190fr_135fr] border-t-2 border-[#a9b0b4] text-[11px]">
                <Backdrop viewBox="-456 0 1941 31" />
                {status.map((s, i) => (
                  <div key={i} className="relative flex items-center justify-center overflow-hidden border-r border-b border-[#d5e6f2] whitespace-nowrap">{s}</div>
                ))}
              </footer>
            </div>
            <div className="relative flex h-[29px] shrink-0 bg-[#0c0c0c]">
              <button type="button" aria-label="Start" className="flex w-[33px] items-center justify-center"><Start10 className="size-3.5" /></button>
              <label className="flex w-[204px] items-center bg-white pl-2">
                <Search className="size-3.5" color="#222" />
                <input placeholder="Type here to search" className="ml-1.5 w-[118px] text-[11px] outline-none placeholder:text-[#333]" />
                <svg viewBox="0 0 56 28" className="h-7 w-14" aria-hidden="true">
                  <path d="m8 4 5-2 4 9-5 3z" fill="#c5b8de" /><path d="M14 9q9 2 6 13H8" fill="none" stroke="#b3aad6" strokeWidth="3" />
                  <path d="M4 24h19v2H4zM6 17h9v2H6z" fill="#7e74a8" />
                  <path d="m38 4 7-3 5 7-7 3zM46 10l7-3 1 8-6 3z" fill="#4b3f78" /><path d="m30 8 5-2 12 8-4 6z" fill="#a58fd8" />
                  <path d="m29 15 7-2 4 6-8 3zM36 21l7-3 3 6-8 3z" fill="#372d5e" /><circle cx="39" cy="13" r="3" fill="#8373c0" />
                </svg>
              </label>
              {innerTasks.map(([name, icon]) => (
                <button key={name} type="button" aria-label={name} className={`ml-0.5 flex w-[33px] items-center justify-center border-b-2 border-[#5f9fd6] ${name === "FUS" ? "bg-[#3d3f44]" : ""}`}>{icon}</button>
              ))}
              <div className="ml-auto flex items-start gap-3 pt-0.5 pr-5 text-white">
                <svg viewBox="0 0 56 12" className="mt-1.5 h-3 w-14" aria-hidden="true">
                  <path d="m1 9 4-4 4 4M16 6a5 5 0 0 1 10 0v5H16zM16 6h10M21 1v10M34 3q4-3 8 0M35 7h6M48 5l5-4v10l-5-4z" stroke="#fff" fill="none" />
                </svg>
                <span className="text-[9px] leading-[11px]">02:03</span>
                <svg viewBox="0 0 12 10" className="mt-1.5 ml-2 h-2.5 w-3" aria-hidden="true"><path d="M0 0h12v10H0z" fill="#fff" /><path d="M2 3h8M2 6h8" stroke="#111" /></svg>
              </div>
              <div role="tooltip" className="absolute right-0.5 bottom-0.5 h-3.5 border border-[#aaa] bg-white px-px font-['Noto_Sans',sans-serif] text-[8px] leading-3 whitespace-nowrap text-[#444]">No speakers or headphones are plugged in.</div>
            </div>
          </div>

          <div className="flex w-[55px] shrink-0 justify-end overflow-hidden">
            <div className="shrink-0">
              <DeskIcon icon={<FolderDesk />} lines={["งานหน้าจอ"]} />
              <DeskIcon icon={<Excel className="size-10" />} lines={["น้ำเย็น สำรวจ", "ลา อ้างอิง ..."]} />
              <DeskIcon icon={<Excel className="size-10" />} lines={["แผนปี 67", "1-09-66"]} />
              <div className="h-[97px]" />
              <DeskIcon icon={<WinRar />} lines={["ประชุมชี้แจง", "วทางการด..."]} />
            </div>
          </div>
        </div>

        <div className="flex h-[25px] shrink-0 items-stretch bg-[#111] text-white">
          {remoteTasks.map(([name, icon], i) => (
            <button key={name} type="button" aria-label={name} className={`flex w-[34px] items-center justify-center ${i === 14 ? "bg-[#3f4042]" : ""}`}>{icon}</button>
          ))}
          <div className="ml-auto flex items-center gap-2.5 border-r border-[#777] pr-1 text-[11px]">
            <svg viewBox="0 0 12 8" className="h-2 w-3" aria-hidden="true"><path d="m1 7 5-5 5 5" stroke="#fff" strokeWidth="1.300" fill="none" /></svg>
            <svg viewBox="0 0 22 13" className="h-[13px] w-[22px]" aria-hidden="true">
              <rect x=".5" y=".5" width="21" height="12" rx="1" fill="none" stroke="#fff" />
              <path d="M3 4h16M3 7h16" stroke="#fff" strokeDasharray="1.500 1" /><path d="M5 10h12" stroke="#fff" />
            </svg>
            <span>ENG</span>
            <span>14:03</span>
          </div>
          <span className="w-[3px]" />
        </div>

        <Viewer className="-top-px right-[360px] w-[51px]" />
        <Viewer className="top-[29px] right-[522px] w-[47px]" />
        <svg viewBox="0 0 23 48" className="absolute right-0 bottom-[72px] h-12 w-[23px]" aria-hidden="true">
          <path d="M4 0h19v48L3 38q-3-2-3-5V4q0-4 4-4z" fill="#fff" />
          <path d="M4 6h18v18H4z" fill="#1083f0" />
          <circle cx="13" cy="15" r="8" fill="#fff" />
          <path d="m6 15 4-3.500V14h6v-2.500l4 3.500-4 3.500V16h-6v2.500z" fill="#1083f0" />
        </svg>
      </div>

      <footer className="relative flex h-12 shrink-0 items-center justify-center bg-[linear-gradient(90deg,#e3e2ee,#dfe2ef_25%,#dbe1ef_35%,#e6dbea_50%,#dce0ee_65%,#dde0ee_80%,#e2dcea)] pb-px text-xs text-[#222]">
        <div className="flex flex-1 items-center gap-1.5 px-5">
          <div className="relative">
            <Svg className="size-[26px]" box={26}>
              <circle cx="12" cy="13" r="8.500" fill="#f59d1c" />
              <path d="M10 24q-4 0-4-3.500t4-3.500q2-4 6-3t4 4q4 0 4 3t-4 3z" fill="#cfe0f2" stroke="#a8c4e4" />
            </Svg>
            <span className="absolute -top-1 left-3 flex size-4 items-center justify-center rounded-full bg-[#c42b1c] text-[10px] text-white">1</span>
          </div>
          <div className="leading-4"><div>32°C</div><div className="text-[11px] text-[#555]">มีแดดบางส่วน</div></div>
        </div>
        {hostTasks.map(([name, icon, open]) => (
          <button key={name} type="button" aria-label={name} className={`relative mx-0.5 flex h-10 w-10 items-center justify-center rounded ${name === "LINE" ? "bg-[#fbe3e6]" : ""}`}>
            {icon}
            {open && <span className={`absolute bottom-0 h-[3px] w-1.5 rounded-full ${name === "LINE" ? "bg-[#c42b1c]" : "bg-[#84858c]"}`} />}
          </button>
        ))}
        <div className="flex flex-1 items-center justify-end px-5">
          <svg viewBox="0 0 12 8" className="h-2 w-3" aria-hidden="true"><path d="m1 7 5-5 5 5" stroke="#222" strokeWidth="1.300" fill="none" /></svg>
          <span className="ml-5 text-[11px]">ENG</span>
          <svg viewBox="0 0 64 18" className="ml-[19px] h-[18px] w-16" aria-hidden="true">
            <path d="M11 3H3q-2 0-2 2v7q0 2 2 2h9q2 0 2-2v-2M4 17h8M8 14v3M12 1h4v5h-4zM14 6v4" stroke="#222" fill="none" strokeWidth="1.200" />
            <path d="M25 7h3l4-4v12l-4-4h-3zM34.500 6q2 3 0 6M37 4q4 5 0 10" stroke="#222" fill="none" strokeWidth="1.200" />
            <path d="M50 6h10v9H48v-5" stroke="#222" fill="none" strokeWidth="1.500" /><path d="M51 8h7v5h-8zM60 9h3v3h-3zM49 1l-3 5h6l-5 5" fill="#222" />
          </svg>
          <div className="ml-4 text-right leading-4"><div>14:03</div><div>14/12/2566</div></div>
          <svg viewBox="0 0 14 16" className="ml-2 h-4 w-3.5" aria-hidden="true"><path d="M1 12h12l-1.500-2.500V6a4.500 4.500 0 0 0-9 0v3.500zM5 13q2 3 4 0" stroke="#222" fill="none" strokeWidth="1.200" /></svg>
        </div>
      </footer>
    </div>
  );
}
